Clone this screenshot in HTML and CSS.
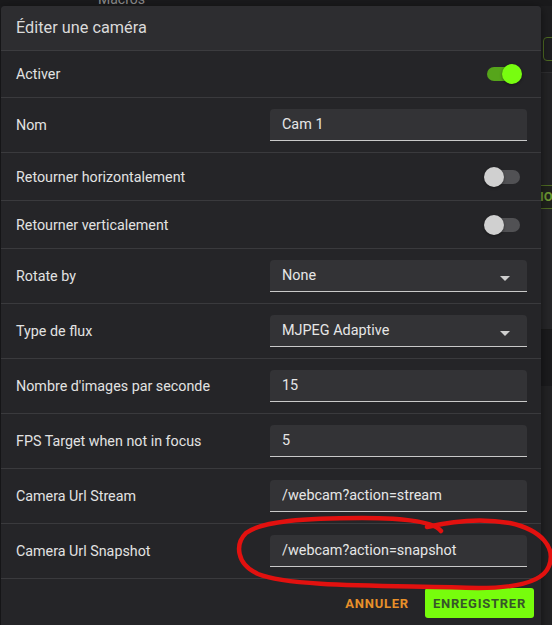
FILE: index.html
```html
<!DOCTYPE html>
<html lang="fr">
<head>
<meta charset="utf-8">
<title>Éditer une caméra</title>
<link rel="stylesheet" href="styles.css">
</head>
<body>
<div class="app">
  <div class="app-top"><span class="app-tab">Macros</span></div>
  <div class="side">
    <div class="side-a"><div class="side-box"></div></div>
    <div class="side-b"></div>
    <div class="side-c"><div class="side-io">IO</div></div>
    <div class="side-d"></div>
    <div class="side-e"></div>
    <div class="side-f"></div>
  </div>
</div>

<div class="dialog">
  <div class="dialog-title">Éditer une caméra</div>

  <div class="row row-switch row-first">
    <div class="label">Activer</div>
    <div class="switch on"><div class="track"></div><div class="thumb"></div></div>
  </div>

  <div class="row row-field">
    <div class="label">Nom</div>
    <input class="field" type="text" value="Cam 1">
  </div>

  <div class="row row-switch">
    <div class="label">Retourner horizontalement</div>
    <div class="switch"><div class="track"></div><div class="thumb"></div></div>
  </div>

  <div class="row row-switch">
    <div class="label">Retourner verticalement</div>
    <div class="switch"><div class="track"></div><div class="thumb"></div></div>
  </div>

  <div class="row row-field">
    <div class="label">Rotate by</div>
    <div class="field select"><span>None</span><span class="caret"></span></div>
  </div>

  <div class="row row-field">
    <div class="label">Type de flux</div>
    <div class="field select"><span>MJPEG Adaptive</span><span class="caret"></span></div>
  </div>

  <div class="row row-field">
    <div class="label">Nombre d'images par seconde</div>
    <input class="field" type="text" value="15">
  </div>

  <div class="row row-field">
    <div class="label">FPS Target when not in focus</div>
    <input class="field" type="text" value="5">
  </div>

  <div class="row row-field">
    <div class="label">Camera Url Stream</div>
    <input class="field" type="text" value="/webcam?action=stream">
  </div>

  <div class="row row-field">
    <div class="label">Camera Url Snapshot</div>
    <input class="field" type="text" value="/webcam?action=snapshot">
  </div>

  <div class="actions">
    <button class="btn btn-text">Annuler</button>
    <button class="btn btn-primary">Enregistrer</button>
  </div>
</div>

<svg class="annotation" width="552" height="625" viewBox="0 0 552 625">
  <path d="M441 531 C434 522 405 518 362 518 C305 518 262 521 246 533 C235 544 236 564 258 574 C292 588 400 585 478 588 C515 588 543 582 549 566 C556 548 542 530 510 523 C482 518 452 521 427 527" fill="none" stroke="#e2110f" stroke-width="4.5" stroke-linecap="round" stroke-linejoin="round"/>
</svg>
</body>
</html>
```

FILE: styles.css
```css
html, body {
  margin: 0;
  padding: 0;
}

body {
  width: 552px;
  height: 625px;
  overflow: hidden;
  position: relative;
  background: #1c1c1e;
  font-family: Roboto, "Liberation Sans", sans-serif;
  color: #e3e3e3;
}

/* background application */
.app {
  height: 625px;
  display: flex;
  flex-direction: column;
}

.app-top {
  height: 6px;
  overflow: visible;
  background: #1a1a1c;
  position: relative;
}

.app-tab {
  display: block;
  margin-left: 98px;
  margin-top: -9px;
  font-size: 14px;
  line-height: 16px;
  color: #8c8c8c;
}

.side {
  flex: 1;
  display: flex;
  flex-direction: column;
  align-items: flex-end;
}

.side > div {
  width: 11px;
}

.side-a {
  height: 67px;
  padding-top: 31px;
  box-sizing: border-box;
  border-bottom: 1px solid #2e2e30;
  background: #1e1e20;
}

.side-box {
  width: 14px;
  height: 22px;
  margin-left: 2px;
  border: 1px solid #4e6a22;
  border-radius: 4px;
}

.side-b {
  height: 112px;
  background: #232325;
}

.side-c {
  height: 22px;
  border-top: 1px solid #4e6a22;
  border-bottom: 1px solid #4e6a22;
  background: #1f211d;
}

.side-io {
  font-size: 13px;
  line-height: 22px;
  font-weight: 700;
  color: #6f9a33;
  margin-left: -1px;
}

.side-d {
  height: 120px;
  background: #262628;
  border-bottom: 1px solid #1a1a1a;
}

.side-e {
  height: 56px;
  background: #1b1b1d;
}

.side-f {
  flex: 1;
  background: #222224;
}

/* dialog */
.dialog {
  position: absolute;
  top: 6px;
  left: 1px;
  width: 540px;
  background: #252528;
  border-radius: 4px 4px 0 0;
  overflow: hidden;
  box-shadow: 0 2px 10px rgba(0, 0, 0, 0.5);
}

.dialog-title {
  height: 45px;
  display: flex;
  align-items: center;
  padding: 0 15px 1px;
  box-sizing: border-box;
  font-size: 16.3px;
  color: #dadada;
  background: #2d2d30;
  border-bottom: 1px solid #3c3c3f;
}

.row {
  display: grid;
  grid-template-columns: 254px 257px;
  align-items: center;
  padding: 0 14px 0 15px;
  border-bottom: 1px solid #3a3a3d;
}

.row-switch {
  height: 47px;
}

.row-first {
  height: 46px;
}

.row-field {
  padding-top: 11px;
  padding-bottom: 11px;
}

.label {
  font-size: 14.3px;
  line-height: 20px;
  color: #e2e2e2;
}

.field {
  box-sizing: border-box;
  width: 257px;
  height: 32px;
  margin: 0;
  padding: 0 12px;
  border: none;
  border-bottom: 1px solid #c9c9c9;
  border-radius: 4px 4px 0 0;
  background: #333336;
  font-family: Roboto, "Liberation Sans", sans-serif;
  font-size: 14.4px;
  color: #e6e6e6;
  outline: none;
}

.select {
  display: flex;
  align-items: center;
  justify-content: space-between;
  padding-right: 17px;
}

.caret {
  width: 0;
  height: 0;
  margin-top: 5px;
  border-left: 5px solid transparent;
  border-right: 5px solid transparent;
  border-top: 5px solid #cfcfcf;
}

/* switch */
.switch {
  position: relative;
  justify-self: end;
  width: 38px;
  height: 20px;
  margin-right: 5px;
}

.track {
  position: absolute;
  left: 3px;
  right: 2px;
  top: 3px;
  height: 14px;
  border-radius: 7px;
  background: #515154;
}

.thumb {
  position: absolute;
  top: 0;
  left: 0;
  width: 20px;
  height: 20px;
  border-radius: 50%;
  background: #d0d0d0;
  box-shadow: 0 1px 3px rgba(0, 0, 0, 0.4);
}

.switch.on .track {
  background: #56a51b;
}

.switch.on .thumb {
  left: auto;
  right: 0;
  background: #78fd10;
}

/* actions */
.actions {
  display: flex;
  justify-content: flex-end;
  align-items: center;
  gap: 8px;
  padding: 9px 7px 20px 8px;
}

.btn {
  height: 30px;
  padding: 0 8px;
  border: none;
  border-radius: 3px;
  font-family: Roboto, "Liberation Sans", sans-serif;
  font-size: 13px;
  font-weight: 700;
  letter-spacing: 0.75px;
  text-transform: uppercase;
  cursor: pointer;
}

.btn-text {
  background: transparent;
  color: #e7902a;
}

.btn-primary {
  background: #77fd0c;
  color: #36562a;
}

.annotation {
  position: absolute;
  top: 0;
  left: 0;
  pointer-events: none;
}
```
